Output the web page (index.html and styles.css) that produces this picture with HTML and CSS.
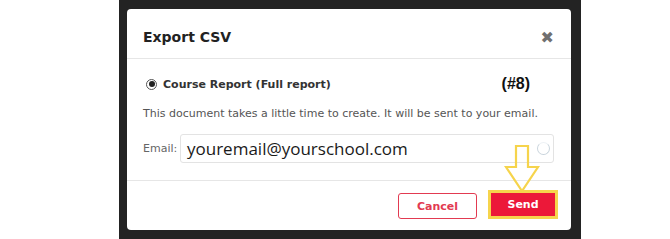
FILE: index.html
```html
<!DOCTYPE html>
<html>
<head>
<meta charset="utf-8">
<link rel="stylesheet" href="styles.css">
</head>
<body>
<div class="backdrop">
  <div class="modal">
    <div class="modal-header">
      <h2 class="title">Export CSV</h2>
      <span class="close">✖</span>
    </div>
    <div class="modal-body">
      <div class="option-row">
        <span class="radio"><span class="radio-dot"></span></span>
        <span class="option-label">Course Report (Full report)</span>
        <span class="tag">(#8)</span>
      </div>
      <p class="desc">This document takes a little time to create. It will be sent to your email.</p>
      <div class="email-row">
        <span class="email-label">Email:</span>
        <div class="email-input">
          <span class="email-value">youremail@yourschool.com</span>
          <span class="spinner"></span>
        </div>
      </div>
    </div>
    <div class="modal-footer">
      <button class="btn btn-cancel">Cancel</button>
      <div class="send-wrap">
        <button class="btn btn-send">Send</button>
        <svg class="arrow" width="36" height="48" viewBox="0 0 36 48">
          <path d="M12 1 H24 V22 H34 L18 46 L2 22 H12 Z" fill="none" stroke="#f6d44c" stroke-width="2.2" stroke-linejoin="miter"/>
        </svg>
      </div>
    </div>
  </div>
</div>
</body>
</html>
```
FILE: styles.css
```css
html, body {
  margin: 0;
  padding: 0;
  background: #ffffff;
  width: 670px;
  height: 239px;
  overflow: hidden;
}
body {
  font-family: "DejaVu Sans", Verdana, sans-serif;
}
.backdrop {
  margin-left: 119px;
  width: 462px;
  height: 239px;
  background: #232323;
  box-sizing: border-box;
  padding: 9px 10px 0 8px;
}
.modal {
  width: 444px;
  height: 221px;
  background: #ffffff;
  border-radius: 4px;
  display: flex;
  flex-direction: column;
}
.modal-header {
  height: 50px;
  box-sizing: border-box;
  border-bottom: 1px solid #e6e6e6;
  display: flex;
  align-items: center;
  justify-content: space-between;
  padding: 7px 17px 0 16px;
}
.title {
  margin: 0;
  font-size: 14px;
  font-weight: bold;
  color: #222;
}
.close {
  font-size: 16px;
  color: #707070;
  font-weight: bold;
}
.modal-body {
  height: 122px;
  box-sizing: border-box;
  border-bottom: 1px solid #e6e6e6;
  padding: 18px 17px 0 16px;
}
.option-row {
  display: flex;
  align-items: center;
  height: 14px;
  padding-left: 3px;
}
.radio {
  width: 11px;
  height: 11px;
  border: 1px solid #555;
  border-radius: 50%;
  display: flex;
  align-items: center;
  justify-content: center;
  box-sizing: border-box;
  margin-right: 6px;
}
.radio-dot {
  width: 6px;
  height: 6px;
  border-radius: 50%;
  background: #222;
}
.option-label {
  font-size: 11px;
  font-weight: bold;
  color: #333;
}
.tag {
  margin-left: auto;
  margin-right: 24px;
  font-family: "Liberation Sans", Arial, sans-serif;
  font-weight: bold;
  font-size: 16px;
  color: #111;
}
.desc {
  margin: 16px 0 0 0;
  font-size: 11px;
  color: #555;
  line-height: 14px;
}
.email-row {
  display: flex;
  align-items: center;
  margin-top: 13px;
}
.email-label {
  font-size: 11px;
  color: #666;
  width: 37px;
}
.email-input {
  width: 374px;
  height: 29px;
  box-sizing: border-box;
  border: 1px solid #e3e3e3;
  border-radius: 3px;
  display: flex;
  align-items: center;
  padding: 0 3px 0 6px;
}
.email-value {
  font-family: "Open Sans", sans-serif;
  font-size: 17px;
  color: #1a1a1a;
}
.spinner {
  margin-left: auto;
  width: 13px;
  height: 13px;
  border: 1.5px solid #c9d4dc;
  border-top-color: #eef2f5;
  border-radius: 50%;
  box-sizing: border-box;
}
.modal-footer {
  flex: 1;
  display: flex;
  justify-content: flex-end;
  align-items: flex-start;
  padding: 12px 13px 0 0;
}
.btn {
  font-family: "DejaVu Sans", Verdana, sans-serif;
  font-size: 11px;
  font-weight: bold;
  border-radius: 3px;
  cursor: pointer;
}
.btn-cancel {
  width: 79px;
  height: 26px;
  background: #fff;
  border: 1.5px solid #e23a51;
  color: #e23a51;
  margin-right: 11px;
}
.send-wrap {
  position: relative;
}
.btn-send {
  width: 70px;
  height: 29px;
  margin-top: -3px;
  background: #ec1839;
  color: #fff;
  border: 3px solid #f6d44c;
  border-radius: 0;
}
.arrow {
  position: absolute;
  left: 16px;
  top: -48px;
}
```
